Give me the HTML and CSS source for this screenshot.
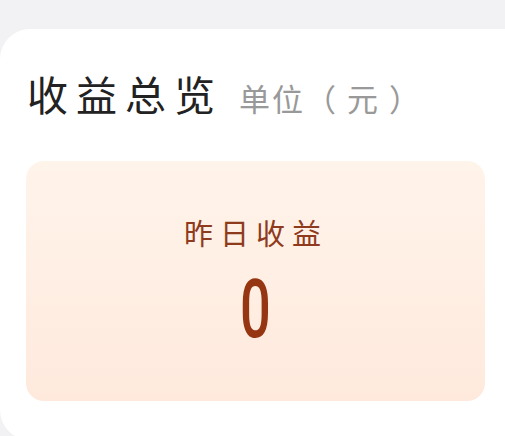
FILE: index.html
```html
<!DOCTYPE html>
<html lang="zh-CN">
<head>
    <meta charset="UTF-8">
    <title>收益总览</title>
    <link rel="stylesheet" href="styles.css">
</head>
<body>

<div class="panel">
    <div class="panel-head">
        <h1>收益总览</h1>
        <span class="unit">单位（ 元 ）</span>
    </div>

    <div class="income-box">
        <div class="income-label">昨日收益</div>
        <div class="income-value"><span>0</span></div>
    </div>
</div>

</body>
</html>
```

FILE: styles.css
```css
html, body {
    margin: 0;
    height: 100%;
    overflow: hidden;
}
body {
    background-color: #f2f2f4;
    font-family: "Noto Sans CJK SC", "Noto Sans", sans-serif;
}
.panel {
    margin-top: 29px;
    height: 411px;
    background-color: #fff;
    border-radius: 30px 0 0 30px;
    padding: 34px 0 0 26px;
    box-sizing: border-box;
}
.panel-head {
    display: flex;
    align-items: baseline;
    padding-left: 1px;
}
.panel-head h1 {
    margin: 0;
    font-size: 41px;
    font-weight: 400;
    letter-spacing: 8px;
    color: #222;
    line-height: 60px;
}
.unit {
    margin-left: 16px;
    font-size: 31px;
    letter-spacing: 2px;
    color: #999;
}
.income-box {
    margin-top: 38px;
    width: 459px;
    height: 240px;
    border-radius: 18px;
    background: linear-gradient(180deg, #fff4ea 0%, #ffe9dd 100%);
    display: flex;
    flex-direction: column;
    align-items: center;
    padding-top: 51px;
    box-sizing: border-box;
}
.income-label {
    font-size: 29px;
    letter-spacing: 7px;
    margin-right: -7px;
    margin-left: -6px;
    color: #8e3a1c;
    line-height: 40px;
}
.income-value {
    margin-top: 17px;
    line-height: 80px;
    font-family: "Roboto", sans-serif;
    font-size: 82px;
    font-weight: 500;
    color: #963511;
}
.income-value span {
    display: inline-block;
    transform: scaleX(0.66);
}
```
